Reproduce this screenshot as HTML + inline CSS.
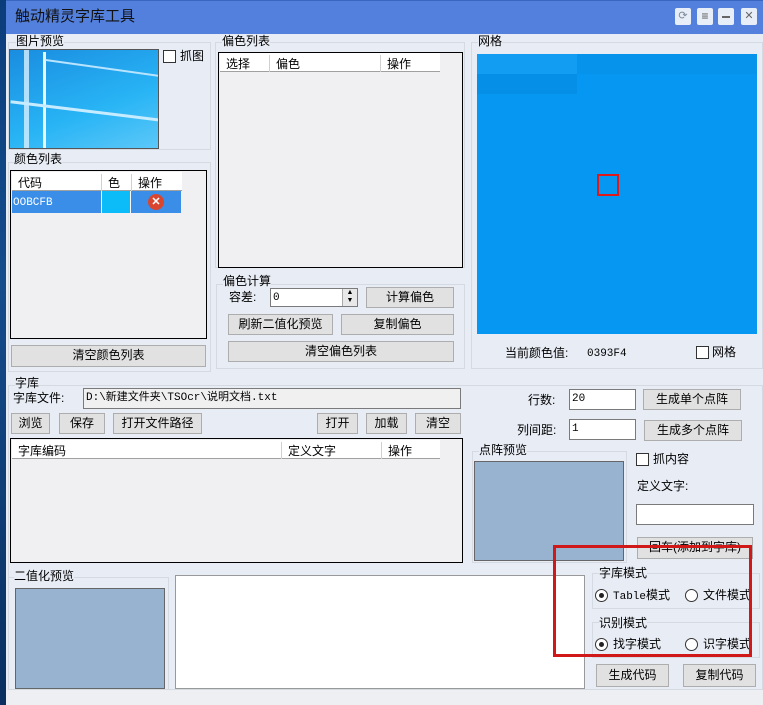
<!DOCTYPE html>
<html><head><meta charset="utf-8"><style>
*{box-sizing:border-box;margin:0;padding:0}
body{width:763px;height:705px;overflow:hidden;background:#e8ecf5;font:12px "Liberation Sans","Noto Sans CJK SC",sans-serif;color:#000;position:relative}
.a{position:absolute}
.t{position:absolute;white-space:nowrap;line-height:14px}
.btn{position:absolute;background:#e1e1e1;border:1px solid #adadad;text-align:center;line-height:19px;white-space:nowrap}
.grp{position:absolute;border:1px solid #d5d9e2}
.box{position:absolute;border:1px solid #000;background:#f0eff2}
.inp{position:absolute;background:#fff;border:1px solid #7a7a7a;padding-left:2px;line-height:18px;font-family:"Liberation Mono","Noto Sans CJK SC",monospace;font-size:11px}
.hd{position:absolute;background:#fff;border-bottom:1px solid #a0a0a0;height:19px}
.hd span{position:absolute;top:2px;border-left:1px solid #d0d0d0;padding-left:6px;height:17px}
.cb{position:absolute;width:13px;height:13px;border:1px solid #333;background:#fff}
.rb{position:absolute;width:13px;height:13px;border:1px solid #333;border-radius:50%;background:#fff}
.rb.on::after{content:"";position:absolute;left:3px;top:3px;width:5px;height:5px;border-radius:50%;background:#222}
</style></head><body>
<div class="a" style="left:0;top:0;width:6px;height:705px;background:linear-gradient(#0b3d7a,#154c8c 40%,#0a2f60)"></div>
<div class="a" style="left:6px;top:0;width:757px;height:34px;background:#5280dc;border-top:1px solid #3a66c0"></div>
<div class="t" style="left:15px;top:8px;font-size:15px;line-height:18px;color:#111">触动精灵字库工具</div>
<div class="a" style="left:675px;top:8px;width:16px;height:17px;background:#e8eef8;border-radius:2px;color:#7a8a9a;font-size:11px;text-align:center;line-height:17px">⟳</div>
<div class="a" style="left:697px;top:8px;width:16px;height:17px;background:#e8eef8;border-radius:2px;color:#555;text-align:center;line-height:16px">≡</div>
<div class="a" style="left:718px;top:8px;width:16px;height:17px;background:#e8eef8;border-radius:2px"><div class="a" style="left:4px;top:8px;width:8px;height:2px;background:#666"></div></div>
<div class="a" style="left:741px;top:8px;width:16px;height:17px;background:#e8eef8;border-radius:2px;color:#666;text-align:center;line-height:16px;font-size:11px">✕</div>

<div class="grp" style="left:8px;top:42px;width:203px;height:108px"></div>
<div class="t" style="left:16px;top:34px;background:#e8ecf5">图片预览</div>
<div class="a" style="left:9px;top:49px;width:150px;height:100px;border:1px solid #555;background:linear-gradient(160deg,#1a8de0,#28b4f5 60%,#5cc8f8);overflow:hidden">
<div class="a" style="left:14px;top:0;width:5px;height:100px;background:#d8f0ff;opacity:.8"></div>
<div class="a" style="left:33px;top:2px;width:3px;height:98px;background:#e8f6ff"></div>
<div class="a" style="left:0;top:60px;width:160px;height:3px;background:#c8ecff;transform:rotate(7deg)"></div>
<div class="a" style="left:35px;top:18px;width:130px;height:2px;background:#b8e4ff;transform:rotate(8deg)"></div>
</div>
<div class="cb" style="left:163px;top:50px"></div><div class="t" style="left:180px;top:49px">抓图</div>

<div class="grp" style="left:8px;top:162px;width:203px;height:210px"></div>
<div class="t" style="left:14px;top:152px;background:#e8ecf5">颜色列表</div>
<div class="box" style="left:10px;top:170px;width:197px;height:169px"></div>
<div class="hd" style="left:12px;top:172px;width:170px"><span style="left:0;border:0">代码</span><span style="left:89px">色</span><span style="left:119px">操作</span></div>
<div class="a" style="left:12px;top:191px;width:169px;height:22px;background:#3a8ee8"></div>
<div class="a" style="left:101px;top:191px;width:30px;height:22px;background:#0bbcf8;border-left:1px solid #fff;border-right:1px solid #fff"></div>
<div class="t" style="left:13px;top:196px;color:#fff;font-family:'Liberation Mono',monospace;font-size:11px">OOBCFB</div>
<div class="a" style="left:148px;top:194px;width:16px;height:16px;border-radius:50%;background:#d9462f;color:#fff;font-size:11px;font-weight:bold;text-align:center;line-height:16px">✕</div>
<div class="btn" style="left:11px;top:345px;width:195px;height:22px">清空颜色列表</div>

<div class="grp" style="left:215px;top:42px;width:250px;height:226px"></div>
<div class="t" style="left:222px;top:34px;background:#e8ecf5">偏色列表</div>
<div class="box" style="left:218px;top:52px;width:245px;height:216px"></div>
<div class="hd" style="left:220px;top:53px;width:220px"><span style="left:0;border:0">选择</span><span style="left:49px">偏色</span><span style="left:160px">操作</span></div>

<div class="grp" style="left:216px;top:284px;width:249px;height:85px"></div>
<div class="t" style="left:223px;top:274px;background:#e8ecf5">偏色计算</div>
<div class="t" style="left:229px;top:290px">容差:</div>
<div class="inp" style="left:270px;top:288px;width:88px;height:19px">0</div>
<div class="a" style="left:342px;top:289px;width:15px;height:17px;background:#e8e8e8;border-left:1px solid #aaa;font-size:7px;line-height:8px;text-align:center">▲<br>▼</div>
<div class="btn" style="left:366px;top:287px;width:88px;height:21px">计算偏色</div>
<div class="btn" style="left:228px;top:314px;width:105px;height:21px">刷新二值化预览</div>
<div class="btn" style="left:341px;top:314px;width:113px;height:21px">复制偏色</div>
<div class="btn" style="left:228px;top:341px;width:226px;height:21px">清空偏色列表</div>

<div class="grp" style="left:471px;top:42px;width:292px;height:327px"></div>
<div class="t" style="left:478px;top:34px;background:#e8ecf5">网格</div>
<div class="a" style="left:477px;top:54px;width:280px;height:280px;background:#0597f2">
<div class="a" style="left:0;top:0;width:100px;height:20px;background:#129df3"></div>
<div class="a" style="left:0;top:20px;width:100px;height:20px;background:#068fe6"></div>
<div class="a" style="left:100px;top:0;width:180px;height:20px;background:#0593ec"></div>
<div class="a" style="left:120px;top:120px;width:22px;height:22px;border:2px solid #e01818"></div>
</div>
<div class="t" style="left:505px;top:346px">当前颜色值:</div>
<div class="t" style="left:587px;top:347px;font-family:'Liberation Mono',monospace;font-size:11px">0393F4</div>
<div class="cb" style="left:696px;top:346px"></div><div class="t" style="left:712px;top:345px">网格</div>

<div class="grp" style="left:8px;top:385px;width:755px;height:305px"></div>
<div class="t" style="left:15px;top:376px;background:#e8ecf5">字库</div>
<div class="t" style="left:13px;top:391px">字库文件:</div>
<div class="inp" style="left:83px;top:388px;width:378px;height:21px;background:#f0f0f0;line-height:19px">D:\新建文件夹\TSOcr\说明文档.txt</div>
<div class="btn" style="left:11px;top:413px;width:39px;height:21px">浏览</div>
<div class="btn" style="left:59px;top:413px;width:46px;height:21px">保存</div>
<div class="btn" style="left:113px;top:413px;width:89px;height:21px">打开文件路径</div>
<div class="btn" style="left:317px;top:413px;width:41px;height:21px">打开</div>
<div class="btn" style="left:366px;top:413px;width:41px;height:21px">加载</div>
<div class="btn" style="left:415px;top:413px;width:46px;height:21px">清空</div>
<div class="box" style="left:10px;top:438px;width:453px;height:125px"></div>
<div class="hd" style="left:12px;top:440px;width:428px"><span style="left:0;border:0">字库编码</span><span style="left:269px">定义文字</span><span style="left:369px">操作</span></div>

<div class="t" style="left:528px;top:393px">行数:</div>
<div class="inp" style="left:569px;top:389px;width:67px;height:21px">20</div>
<div class="btn" style="left:643px;top:389px;width:98px;height:21px">生成单个点阵</div>
<div class="t" style="left:517px;top:423px">列间距:</div>
<div class="inp" style="left:569px;top:419px;width:67px;height:21px">1</div>
<div class="btn" style="left:644px;top:420px;width:98px;height:21px">生成多个点阵</div>
<div class="grp" style="left:472px;top:451px;width:155px;height:112px"></div>
<div class="t" style="left:479px;top:443px;background:#e8ecf5">点阵预览</div>
<div class="a" style="left:474px;top:461px;width:150px;height:100px;background:#98b3d0;border:1px solid #666"></div>
<div class="cb" style="left:636px;top:453px"></div><div class="t" style="left:653px;top:452px">抓内容</div>
<div class="t" style="left:637px;top:479px">定义文字:</div>
<div class="inp" style="left:636px;top:504px;width:118px;height:21px"></div>
<div class="btn" style="left:637px;top:537px;width:116px;height:22px">回车(添加到字库)</div>

<div class="grp" style="left:8px;top:577px;width:161px;height:113px"></div>
<div class="t" style="left:14px;top:569px;background:#e8ecf5">二值化预览</div>
<div class="a" style="left:15px;top:588px;width:150px;height:101px;background:#98b3d0;border:1px solid #666"></div>
<div class="a" style="left:175px;top:575px;width:410px;height:114px;background:#fff;border:1px solid #999"></div>

<div class="grp" style="left:592px;top:573px;width:168px;height:36px"></div>
<div class="t" style="left:599px;top:566px;background:#e8ecf5">字库模式</div>
<div class="rb on" style="left:595px;top:589px"></div><div class="t" style="left:613px;top:588px"><span style="font-family:'Liberation Mono',monospace;font-size:11px">Table</span>模式</div>
<div class="rb" style="left:685px;top:589px"></div><div class="t" style="left:703px;top:588px">文件模式</div>
<div class="grp" style="left:592px;top:622px;width:168px;height:36px"></div>
<div class="t" style="left:599px;top:616px;background:#e8ecf5">识别模式</div>
<div class="rb on" style="left:595px;top:638px"></div><div class="t" style="left:613px;top:637px">找字模式</div>
<div class="rb" style="left:685px;top:638px"></div><div class="t" style="left:703px;top:637px">识字模式</div>
<div class="btn" style="left:596px;top:664px;width:73px;height:23px;line-height:21px">生成代码</div>
<div class="btn" style="left:683px;top:664px;width:73px;height:23px;line-height:21px">复制代码</div>
<div class="a" style="left:553px;top:545px;width:199px;height:112px;border:3px solid #d01818"></div>
<div class="a" style="left:6px;top:690px;width:757px;height:15px;background:#eeeff2"></div>
</body></html>
